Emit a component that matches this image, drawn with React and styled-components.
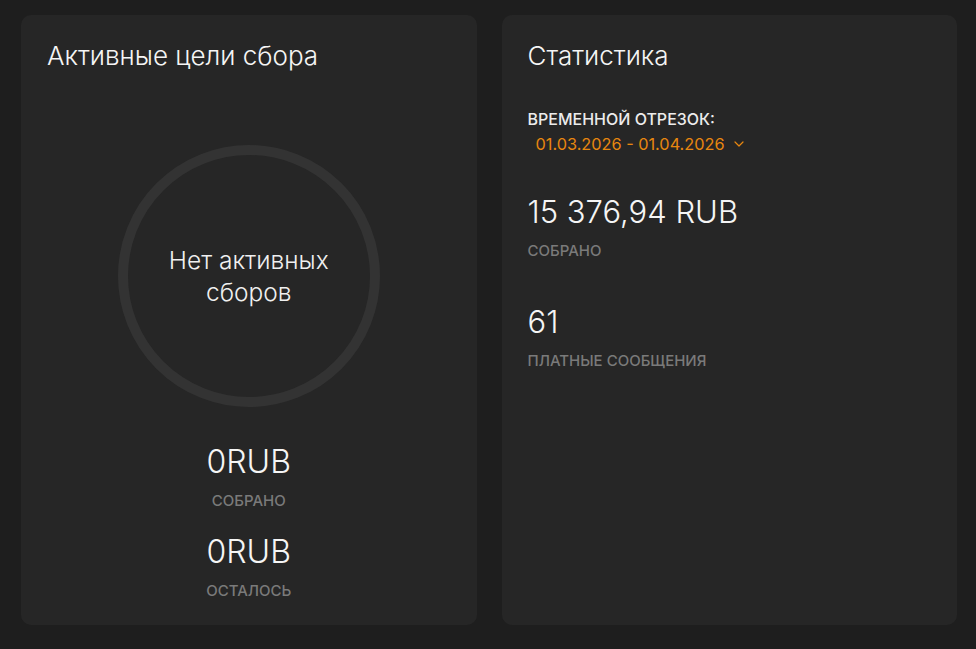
import React from "react";
import styled, { createGlobalStyle } from "styled-components";

const Global = createGlobalStyle`
  html, body { margin: 0; padding: 0; background: #1e1e1e; }
  body { font-family: Inter, "Noto Sans", sans-serif; color: #f2f2f2; }
`;

const Page = styled.div`
  display: grid;
  grid-template-columns: 1fr 1fr;
  gap: 25px;
  padding: 15px 19px 24px 21px;
  height: 649px;
  box-sizing: border-box;
`;

const Card = styled.section`
  background: #262626;
  border-radius: 10px;
  padding: 26px 26px 24px;
  display: flex;
  flex-direction: column;
  box-sizing: border-box;
`;

const Title = styled.h2`
  margin: 0;
  font-size: 26px;
  font-weight: 300;
  line-height: 30px;
  color: #f5f5f5;
`;

const GoalBody = styled.div`
  flex: 1;
  display: flex;
  flex-direction: column;
  align-items: center;
  padding-top: 74px;
`;

const Ring = styled.div`
  width: 262px;
  height: 262px;
  border-radius: 50%;
  border: 10px solid #333333;
  box-sizing: border-box;
  display: flex;
  align-items: center;
  justify-content: center;
  text-align: center;
  font-size: 24.5px;
  font-weight: 300;
  line-height: 32px;
  color: #f0f0f0;
`;

const Metric = styled.div`
  display: flex;
  flex-direction: column;
  align-items: ${(p) => (p.$center ? "center" : "flex-start")};
  margin-top: ${(p) => p.$mt}px;
`;

const Value = styled.div`
  font-size: ${(p) => p.$size || 31}px;
  font-weight: 300;
  line-height: 36px;
  color: #f5f5f5;
`;

const Label = styled.div`
  margin-top: 12px;
  font-size: 15px;
  font-weight: 500;
  line-height: 18px;
  color: #7a7a7a;
`;

const PeriodLabel = styled.div`
  margin-top: 38px;
  font-size: 16px;
  font-weight: 500;
  line-height: 20px;
  color: #ececec;
`;

const DateButton = styled.button`
  align-self: flex-start;
  margin-top: 5px;
  padding: 0 0 0 8px;
  background: none;
  border: none;
  font-family: inherit;
  font-size: 16.3px;
  font-weight: 400;
  line-height: 20px;
  color: #e8870f;
  display: flex;
  align-items: center;
  gap: 9px;
  cursor: pointer;
`;

const Chevron = () => (
  <svg width="10" height="6" viewBox="0 0 10 6" fill="none">
    <path d="M1 1l4 4 4-4" stroke="#e8870f" strokeWidth="1.2" strokeLinecap="round" strokeLinejoin="round" />
  </svg>
);

export default function App() {
  return (
    <>
      <Global />
      <Page>
        <Card>
          <Title>Активные цели сбора</Title>
          <GoalBody>
            <Ring>
              Нет активных
              <br />
              сборов
            </Ring>
            <Metric $center $mt={37}>
              <Value $size={32}>0RUB</Value>
              <Label>СОБРАНО</Label>
            </Metric>
            <Metric $center $mt={24}>
              <Value $size={32}>0RUB</Value>
              <Label>ОСТАЛОСЬ</Label>
            </Metric>
          </GoalBody>
        </Card>
        <Card>
          <Title>Статистика</Title>
          <PeriodLabel>ВРЕМЕННОЙ ОТРЕЗОК:</PeriodLabel>
          <DateButton>
            01.03.2026 - 01.04.2026
            <Chevron />
          </DateButton>
          <Metric $mt={40}>
            <Value>15 376,94 RUB</Value>
            <Label>СОБРАНО</Label>
          </Metric>
          <Metric $mt={44}>
            <Value>61</Value>
            <Label>ПЛАТНЫЕ СООБЩЕНИЯ</Label>
          </Metric>
        </Card>
      </Page>
    </>
  );
}
